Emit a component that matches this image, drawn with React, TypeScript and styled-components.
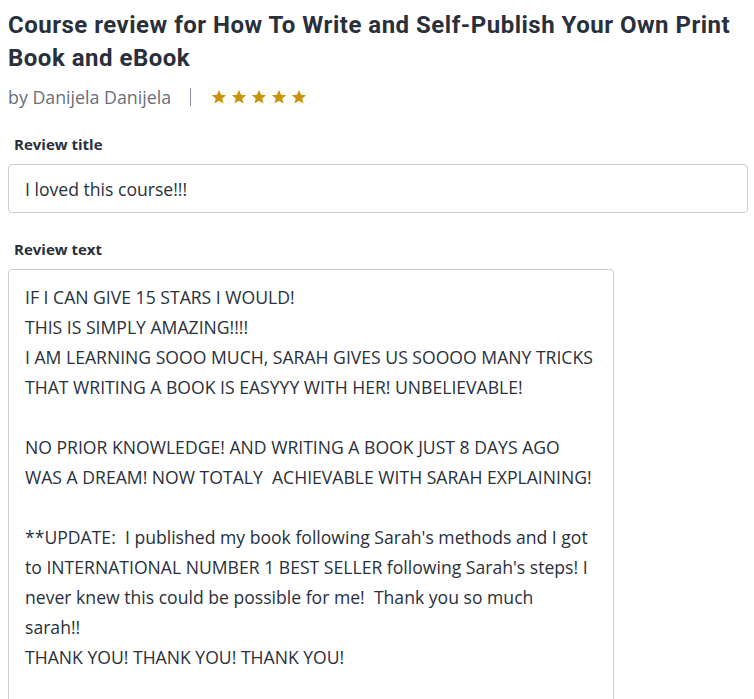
import React from "react";
import styled, { createGlobalStyle } from "styled-components";

const Global = createGlobalStyle`
  html, body { margin: 0; padding: 0; background: #ffffff; }
  body { font-family: "Open Sans", "Liberation Sans", sans-serif; color: #29303b; }
`;

const Page = styled.div`
  padding: 9px 8px 8px;
  display: flex;
  flex-direction: column;
`;

const Title = styled.h1`
  margin: 0;
  font-family: "Roboto", "Liberation Sans", sans-serif;
  font-weight: 700;
  font-size: 24px;
  line-height: 33px;
  letter-spacing: 0.5px;
  color: #29303b;
`;

const Byline = styled.div`
  margin-top: 9px;
  display: flex;
  align-items: center;
  height: 26px;
  font-size: 17.8px;
  color: #686f7a;
`;

const Divider = styled.span`
  display: inline-block;
  width: 1px;
  height: 18px;
  background: #8a92a3;
  margin: 0 20px 0 19px;
`;

const Stars = styled.div`
  display: flex;
  gap: 4px;
  align-items: center;
`;

const Field = styled.div<{ $top: number }>`
  margin-top: ${(p) => p.$top}px;
  display: flex;
  flex-direction: column;
  gap: 9px;
`;

const Label = styled.label`
  font-weight: 700;
  font-size: 15px;
  line-height: 22px;
  padding-left: 6px;
  color: #29303b;
`;

const Box = styled.div<{ $width: number }>`
  box-sizing: border-box;
  width: ${(p) => p.$width}px;
  border: 1px solid #cacbd3;
  border-radius: 4px;
  font-size: 17.6px;
  color: #29303b;
  padding-left: 16px;
`;

const InputBox = styled(Box)`
  height: 49px;
  display: flex;
  align-items: center;
`;

const TextBox = styled(Box)`
  padding-top: 12px;
  height: 560px;
  line-height: 30px;
  white-space: pre;
`;

const Star = () => (
  <svg width="16" height="16" viewBox="0 0 24 24">
    <path
      fill="#c9930b"
      d="M12 1.5l3.1 7.2 7.6.6-5.8 5 1.8 7.6L12 17.8l-6.7 4.1 1.8-7.6-5.8-5 7.6-.6z"
    />
  </svg>
);

const review = [
  "IF I CAN GIVE 15 STARS I WOULD!",
  "THIS IS SIMPLY AMAZING!!!!",
  "I AM LEARNING SOOO MUCH, SARAH GIVES US SOOOO MANY TRICKS",
  "THAT WRITING A BOOK IS EASYYY WITH HER! UNBELIEVABLE!",
  "",
  "NO PRIOR KNOWLEDGE! AND WRITING A BOOK JUST 8 DAYS AGO",
  "WAS A DREAM! NOW TOTALY  ACHIEVABLE WITH SARAH EXPLAINING!",
  "",
  "**UPDATE:  I published my book following Sarah's methods and I got",
  "to INTERNATIONAL NUMBER 1 BEST SELLER following Sarah's steps! I",
  "never knew this could be possible for me!  Thank you so much",
  "sarah!!",
  "THANK YOU! THANK YOU! THANK YOU!",
].join("\n");

export default function App() {
  return (
    <>
      <Global />
      <Page>
        <Title>Course review for How To Write and Self-Publish Your Own Print Book and eBook</Title>
        <Byline>
          by Danijela Danijela
          <Divider />
          <Stars>
            {[0, 1, 2, 3, 4].map((i) => (
              <Star key={i} />
            ))}
          </Stars>
        </Byline>
        <Field $top={23}>
          <Label>Review title</Label>
          <InputBox $width={740}>I loved this course!!!</InputBox>
        </Field>
        <Field $top={25}>
          <Label>Review text</Label>
          <TextBox $width={606}>{review}</TextBox>
        </Field>
      </Page>
    </>
  );
}
